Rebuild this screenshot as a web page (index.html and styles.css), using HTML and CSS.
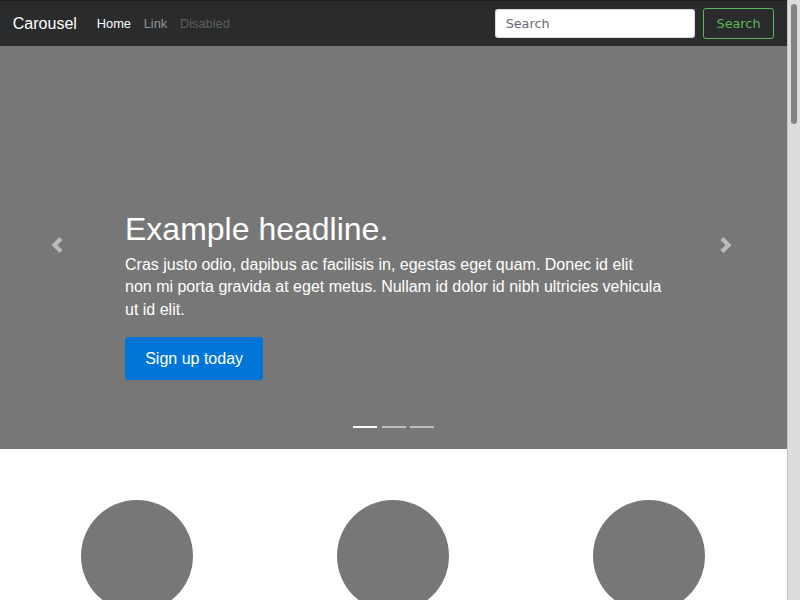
FILE: index.html
```html
<!DOCTYPE html>
<html lang="en">
<head>
<meta charset="utf-8">
<title>Carousel Template</title>
<link rel="stylesheet" href="styles.css">
</head>
<body>
<nav class="navbar">
  <a class="brand" href="#">Carousel</a>
  <ul class="nav">
    <li><a class="nav-link active" href="#">Home</a></li>
    <li><a class="nav-link" href="#">Link</a></li>
    <li><a class="nav-link disabled" href="#">Disabled</a></li>
  </ul>
  <form class="search">
    <input class="search-input" type="text" placeholder="Search">
    <button class="search-btn" type="submit">Search</button>
  </form>
</nav>

<div class="scrollbar"><div class="thumb"></div></div>

<div class="carousel">
  <div class="carousel-item">
    <div class="caption">
      <h1 class="headline">Example headline.</h1>
      <p class="lead">Cras justo odio, dapibus ac facilisis in, egestas eget quam. Donec id elit non mi porta gravida at eget metus. Nullam id dolor id nibh ultricies vehicula ut id elit.</p>
      <p class="cta"><a class="btn-primary" href="#">Sign up today</a></p>
    </div>
  </div>
  <ol class="indicators">
    <li class="ind active"></li>
    <li class="ind"></li>
    <li class="ind"></li>
  </ol>
  <a class="control prev" href="#">
    <svg class="chev" viewBox="0 0 8 8" width="16" height="16"><path d="M5.25 0l-4 4 4 4 1.5-1.5-2.5-2.5 2.5-2.5-1.5-1.5z" fill="#fff"/></svg>
  </a>
  <a class="control next" href="#">
    <svg class="chev" viewBox="0 0 8 8" width="16" height="16"><path d="M2.75 0l-1.5 1.5 2.5 2.5-2.5 2.5 1.5 1.5 4-4-4-4z" fill="#fff"/></svg>
  </a>
</div>

<div class="marketing">
  <div class="row">
    <div class="col">
      <div class="circle"></div>
      <h2 class="col-title">Heading</h2>
      <p class="col-text">Donec sed odio dui. Etiam porta sem malesuada magna mollis euismod. Nullam id dolor id nibh ultricies vehicula ut id elit. Morbi leo risus, porta ac consectetur ac, vestibulum at eros. Praesent commodo cursus magna.</p>
      <p><a class="btn-secondary" href="#">View details &raquo;</a></p>
    </div>
    <div class="col">
      <div class="circle"></div>
      <h2 class="col-title">Heading</h2>
      <p class="col-text">Duis mollis, est non commodo luctus, nisi erat porttitor ligula, eget lacinia odio sem nec elit. Cras mattis consectetur purus sit amet fermentum. Fusce dapibus, tellus ac cursus commodo, tortor mauris condimentum nibh.</p>
      <p><a class="btn-secondary" href="#">View details &raquo;</a></p>
    </div>
    <div class="col">
      <div class="circle"></div>
      <h2 class="col-title">Heading</h2>
      <p class="col-text">Donec sed odio dui. Cras justo odio, dapibus ac facilisis in, egestas eget quam. Vestibulum id ligula porta felis euismod semper. Fusce dapibus, tellus ac cursus commodo, tortor mauris condimentum nibh, ut fermentum massa justo sit amet risus.</p>
      <p><a class="btn-secondary" href="#">View details &raquo;</a></p>
    </div>
  </div>

  <hr class="divider">
  <div class="featurette">
    <div class="feat-text">
      <h2 class="feat-heading">First featurette heading. <span class="muted">It'll blow your mind.</span></h2>
      <p class="feat-lead">Donec ullamcorper nulla non metus auctor fringilla. Vestibulum id ligula porta felis euismod semper. Praesent commodo cursus magna, vel scelerisque nisl consectetur. Fusce dapibus, tellus ac cursus commodo.</p>
    </div>
    <div class="feat-img"></div>
  </div>
  <hr class="divider">
  <div class="featurette">
    <div class="feat-img"></div>
    <div class="feat-text">
      <h2 class="feat-heading">Oh yeah, it's that good. <span class="muted">See for yourself.</span></h2>
      <p class="feat-lead">Donec ullamcorper nulla non metus auctor fringilla. Vestibulum id ligula porta felis euismod semper. Praesent commodo cursus magna, vel scelerisque nisl consectetur. Fusce dapibus, tellus ac cursus commodo.</p>
    </div>
  </div>
  <hr class="divider">
  <div class="featurette">
    <div class="feat-text">
      <h2 class="feat-heading">And lastly, this one. <span class="muted">Checkmate.</span></h2>
      <p class="feat-lead">Donec ullamcorper nulla non metus auctor fringilla. Vestibulum id ligula porta felis euismod semper. Praesent commodo cursus magna, vel scelerisque nisl consectetur. Fusce dapibus, tellus ac cursus commodo.</p>
    </div>
    <div class="feat-img"></div>
  </div>
  <hr class="divider">

  <footer class="footer">
    <p class="back">Back to top</p>
    <p>&copy; 2017 Company, Inc. &middot; Privacy &middot; Terms</p>
  </footer>
</div>
</body>
</html>
```

FILE: styles.css
```css
html, body {
  margin: 0;
  padding: 0;
}
body {
  font-family: "Liberation Sans", Arial, sans-serif;
  font-size: 12.8px;
  line-height: 1.5;
  color: #292b2c;
  background: #fff;
  padding-top: 38.4px;
  padding-bottom: 38.4px;
  margin-right: 13px;
}
a { text-decoration: none; }

/* fake native scrollbar */
.scrollbar {
  position: fixed;
  top: 0;
  right: 0;
  bottom: 0;
  width: 13px;
  box-sizing: border-box;
  background: #dcdcdc;
  border-left: 1px solid #c4c4c4;
  z-index: 20;
}
.thumb {
  position: absolute;
  top: 4px;
  left: 3px;
  width: 6px;
  height: 120px;
  border-radius: 3px;
  background: #828282;
}

/* navbar */
.navbar {
  position: fixed;
  top: 0;
  left: 0;
  right: 13px;
  z-index: 10;
  height: 46px;
  box-sizing: border-box;
  background: #292b2c;
  border-top: 1px solid #1c1d1e;
  display: flex;
  align-items: center;
  padding: 0 13px 0 12.8px;
}
.brand {
  color: #fff;
  font-size: 16px;
  line-height: 1;
  margin-right: 13.6px;
}
.nav {
  display: flex;
  list-style: none;
  margin: 0;
  padding: 0;
  flex: 1;
}
.nav-link {
  display: block;
  padding: 0 6.4px;
  font-size: 12.8px;
  color: rgba(255,255,255,.5);
}
.nav-link.active { color: #fff; }
.nav-link.disabled { color: rgba(255,255,255,.25); }

.search {
  display: flex;
  align-items: center;
  margin: 0;
}
.search-input {
  font-family: "DejaVu Sans", sans-serif;
  font-size: 12.8px;
  width: 200px;
  height: 29px;
  box-sizing: border-box;
  padding: 0 9.6px;
  border: 1px solid rgba(0,0,0,.15);
  border-radius: 3px;
  background: #fff;
  color: #464a4c;
  margin-right: 8px;
  outline: none;
}
.search-input::placeholder { color: #636c72; }
.search-btn {
  font-family: "DejaVu Sans", sans-serif;
  font-size: 12.8px;
  height: 31px;
  box-sizing: border-box;
  padding: 0 12.5px;
  background: transparent;
  border: 1px solid #5cb85c;
  border-radius: 3px;
  color: #5cb85c;
}

/* carousel */
.carousel {
  position: relative;
  height: 410.6px;
  background: #777;
  margin-bottom: 51.2px;
}
.carousel-item {
  height: 100%;
  position: relative;
}
.caption {
  position: absolute;
  left: 125px;
  right: 125px;
  bottom: 39.4px;
  padding-bottom: 30px;
  color: #fff;
}
.headline {
  font-size: 32px;
  font-weight: 400;
  line-height: 1.1;
  margin: 0 0 6.4px;
}
.lead {
  font-size: 16px;
  line-height: 1.4;
  margin: 0 0 16px;
}
.cta { margin: 0; line-height: 1; }
.btn-primary {
  display: inline-block;
  background: #0275d8;
  color: #fff;
  font-size: 16px;
  line-height: 21.3px;
  padding: 9.6px 19.2px;
  border: 1px solid #0275d8;
  border-radius: 3px;
}

.indicators {
  position: absolute;
  left: 0;
  right: 0;
  bottom: 21px;
  margin: 0;
  padding: 0;
  list-style: none;
  display: flex;
  justify-content: center;
  gap: 4.8px;
}
.ind {
  width: 24px;
  height: 2.4px;
  background: rgba(255,255,255,.5);
}
.ind.active { background: #fff; }

.control {
  position: absolute;
  top: 2px;
  bottom: 0;
  width: 114px;
  display: flex;
  align-items: center;
  justify-content: center;
  opacity: .5;
}
.prev { left: 0; }
.next { right: 4px; }
.chev { display: block; }

/* marketing */
.marketing {
  width: 768px;
  margin: 0 9px;
}
.row {
  display: grid;
  grid-template-columns: repeat(3, 1fr);
}
.col {
  padding: 0 12px;
  text-align: center;
  margin-bottom: 19.2px;
}
.circle {
  width: 112px;
  height: 112px;
  border-radius: 50%;
  background: #777;
  margin: 0 auto;
}
.col-title {
  font-size: 25.6px;
  font-weight: 400;
  line-height: 1.1;
  margin: 8px 0 6.4px;
}
.col-text {
  margin: 0 8px 12.8px;
}
.btn-secondary {
  display: inline-block;
  padding: 6.4px 12.8px;
  border: 1px solid #ccc;
  border-radius: 3px;
  color: #292b2c;
}

.divider {
  margin: 64px 0;
  border: 0;
  border-top: 1px solid rgba(0,0,0,.1);
}
.featurette {
  display: grid;
  grid-template-columns: 7fr 5fr;
  gap: 24px;
  padding: 0 12px;
  align-items: start;
}
.featurette:nth-of-type(2n) { grid-template-columns: 5fr 7fr; }
.feat-heading {
  font-size: 40px;
  font-weight: 300;
  line-height: 1;
  letter-spacing: -1px;
  margin: 100px 0 12px;
}
.muted { color: #636c72; }
.feat-lead {
  font-size: 16px;
  font-weight: 300;
  margin: 0;
}
.feat-img {
  width: 100%;
  aspect-ratio: 1 / 1;
  background: #eee;
}
.footer {
  padding: 0 12px;
}
.back { float: right; margin: 0; }
```
